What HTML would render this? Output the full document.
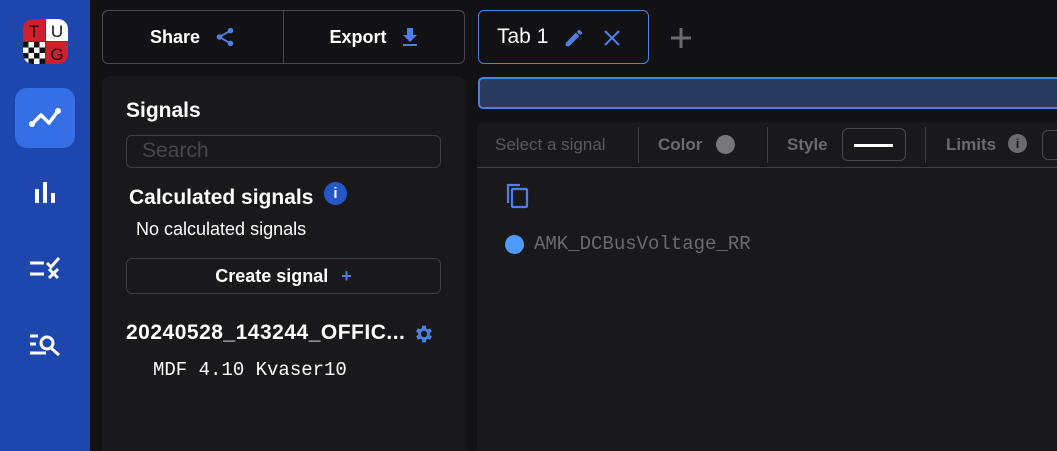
<!DOCTYPE html>
<html style="width:1057px;height:451px;overflow:hidden"><head><style>
*{box-sizing:border-box;margin:0;padding:0}
body{width:1057px;height:451px;overflow:hidden;background:#121214;font-family:"Liberation Sans",sans-serif;color:#fff;position:relative}
.abs{position:absolute}
.side{left:0;top:0;width:90px;height:451px;background:#1d47ad}
.btnbar{left:102px;top:10px;width:363px;height:54px;border:1px solid #4a4a4e;border-radius:6px;display:flex}
.btnbar div{flex:1;display:flex;align-items:center;justify-content:center;font-weight:bold;font-size:18px;gap:14px}
.panel{left:102px;top:76px;width:363px;height:375px;background:#19191b;border-radius:8px 8px 0 0}
.mono{font-family:"Liberation Mono",monospace}
</style></head><body>
<div class="abs side">
  <svg class="abs" style="left:23px;top:19px" width="46" height="46" viewBox="0 0 46 46">
    <clipPath id="c"><rect x="0" y="0" width="45" height="45" rx="10"/></clipPath>
    <g clip-path="url(#c)">
    <rect x="0" y="0" width="22" height="22" fill="#d0202e"/>
    <rect x="23" y="0" width="22" height="22" fill="#fff"/>
    <rect x="23" y="23" width="22" height="22" fill="#d0202e"/>
    <rect x="0" y="23" width="22" height="22" fill="#fff"/>
    <g fill="#111"><rect x="0" y="23" width="5.5" height="5.5"/><rect x="11" y="23" width="5.5" height="5.5"/><rect x="5.5" y="28.5" width="5.5" height="5.5"/><rect x="16.5" y="28.5" width="5.5" height="5.5"/><rect x="0" y="34" width="5.5" height="5.5"/><rect x="11" y="34" width="5.5" height="5.5"/><rect x="5.5" y="39.5" width="5.5" height="5.5"/><rect x="16.5" y="39.5" width="5.5" height="5.5"/></g>
    </g>
    <text x="11" y="18" font-size="17" text-anchor="middle" fill="#111" font-family="Liberation Sans">T</text>
    <text x="34" y="18" font-size="17" text-anchor="middle" fill="#111" font-family="Liberation Sans">U</text>
    <text x="34" y="41" font-size="17" text-anchor="middle" fill="#111" font-family="Liberation Sans">G</text>
  </svg>
  <div class="abs" style="left:15px;top:88px;width:60px;height:60px;background:#356fe6;border-radius:12px"></div>
  <svg class="abs" style="left:28px;top:106px" width="34" height="22" viewBox="0 0 34 22"><polyline points="4,18 13,9 21,17 30,5" fill="none" stroke="#fff" stroke-width="3.5" stroke-linecap="round" stroke-linejoin="round"/><circle cx="4" cy="18" r="3" fill="#fff"/><circle cx="30" cy="5" r="3" fill="#fff"/></svg>
  <svg class="abs" style="left:34px;top:182px" width="24" height="22"><rect x="1" y="7" width="4" height="14" fill="#fff"/><rect x="9" y="0" width="4" height="21" fill="#fff"/><rect x="17" y="11" width="4" height="10" fill="#fff"/></svg>
  <svg class="abs" style="left:29px;top:255px" width="34" height="26"><g stroke="#fff" stroke-width="3"><line x1="1" y1="8" x2="15" y2="8"/><line x1="1" y1="19" x2="15" y2="19"/><polyline points="18,8 22,12 30,3" fill="none"/><line x1="20" y1="14" x2="29" y2="23"/><line x1="29" y1="14" x2="20" y2="23"/></g></svg>
  <svg class="abs" style="left:29px;top:333px" width="34" height="24"><g stroke="#fff" stroke-width="3" fill="none"><line x1="1" y1="3" x2="9" y2="3"/><line x1="1" y1="11" x2="7" y2="11"/><line x1="1" y1="20" x2="17" y2="20"/><circle cx="18" cy="10" r="6"/><line x1="22" y1="15" x2="30" y2="22"/></g></svg>
</div>
<div class="abs btnbar">
  <div style="border-right:1px solid #4a4a4e">Share <svg width="22" height="22" viewBox="0 0 24 24"><g fill="#4d7fe6"><circle cx="18" cy="5" r="3"/><circle cx="6" cy="12" r="3"/><circle cx="18" cy="19" r="3"/></g><g stroke="#4d7fe6" stroke-width="2"><line x1="6" y1="12" x2="18" y2="5"/><line x1="6" y1="12" x2="18" y2="19"/></g></svg></div>
  <div>Export <svg width="18" height="20" viewBox="0 0 18 20"><path d="M6 1h6v7h4l-7 7-7-7h4z" fill="#4d7fe6"/><rect x="2" y="17" width="14" height="2" fill="#4d7fe6"/></svg></div>
</div>
<div class="abs panel">
  <div class="abs" style="left:24px;top:23px;font-size:21px;font-weight:bold">Signals</div>
  <div class="abs" style="left:24px;top:59px;width:315px;height:33px;border:1px solid #3e3e42;border-radius:6px;padding:3px 15px;font-size:21px;color:#48484c">Search</div>
  <div class="abs" style="left:27px;top:110px;font-size:21px;font-weight:bold">Calculated signals</div>
  <div class="abs" style="left:222px;top:106px;width:23px;height:23px;border-radius:50%;background:#2457c8;color:#fff;font-weight:bold;font-size:15px;text-align:center;line-height:23px">i</div>
  <div class="abs" style="left:34px;top:143px;font-size:18px">No calculated signals</div>
  <div class="abs" style="left:24px;top:182px;width:315px;height:36px;border:1px solid #3e3e42;border-radius:6px;text-align:center;line-height:34px;font-size:18px;font-weight:bold">Create signal <span style="color:#4d7fe6;margin-left:8px">+</span></div>
  <div class="abs" style="left:24px;top:245px;font-size:21px;font-weight:bold;letter-spacing:0.5px">20240528_143244_OFFIC...</div>
  <svg class="abs" style="left:311px;top:247px" width="22" height="22" viewBox="0 0 24 24"><path fill="#4d7fe6" d="M19.4 13a7.8 7.8 0 000-2l2.1-1.6-2-3.5-2.5 1a7.6 7.6 0 00-1.7-1L15 3h-4l-.4 2.7a7.6 7.6 0 00-1.7 1l-2.5-1-2 3.5L6.6 11a7.8 7.8 0 000 2l-2.1 1.6 2 3.5 2.5-1a7.6 7.6 0 001.7 1L11 21h4l.4-2.7a7.6 7.6 0 001.7-1l2.5 1 2-3.5zM13 15.5a3.5 3.5 0 110-7 3.5 3.5 0 010 7z" transform="translate(-1 0)"/></svg>
  <div class="abs mono" style="left:51px;top:283px;font-size:19px">MDF 4.10 Kvaser10</div>
</div>
<div class="abs" style="left:478px;top:10px;width:171px;height:54px;border:1px solid #4d7fe6;border-radius:6px"></div>
<div class="abs" style="left:497px;top:25px;font-size:21px">Tab 1</div>
<svg class="abs" style="left:563px;top:27px" width="22" height="22" viewBox="0 0 24 24"><path fill="#4d7fe6" d="M3 17.25V21h3.75L17.8 9.94l-3.75-3.75zM20.7 7.04a1 1 0 000-1.41l-2.34-2.34a1 1 0 00-1.41 0l-1.83 1.83 3.75 3.75z"/></svg>
<svg class="abs" style="left:603px;top:29px" width="18" height="18"><g stroke="#4d7fe6" stroke-width="2"><line x1="2" y1="2" x2="16" y2="16"/><line x1="16" y1="2" x2="2" y2="16"/></g></svg>
<svg class="abs" style="left:670px;top:27px" width="22" height="22"><g stroke="#6a6a70" stroke-width="3"><line x1="11" y1="1" x2="11" y2="21"/><line x1="1" y1="11" x2="21" y2="11"/></g></svg>
<div class="abs" style="left:478px;top:77px;width:600px;height:32px;background:#2a3a5e;border:2px solid #4d7fe6;border-radius:5px"></div>
<div class="abs" style="left:477px;top:122px;width:600px;height:329px;background:#19191b;border-radius:6px 6px 0 0"></div>
<div class="abs" style="left:477px;top:167px;width:600px;height:1px;background:#3e3e42"></div>
<div class="abs" style="left:495px;top:135px;font-size:17px;color:#5a5a5e">Select a signal</div>
<div class="abs" style="left:638px;top:127px;width:1px;height:36px;background:#3e3e42"></div>
<div class="abs" style="left:658px;top:135px;font-size:17px;font-weight:bold;color:#6a6a70">Color</div>
<div class="abs" style="left:716px;top:135px;width:19px;height:19px;border-radius:50%;background:#77777c"></div>
<div class="abs" style="left:767px;top:127px;width:1px;height:36px;background:#3e3e42"></div>
<div class="abs" style="left:787px;top:135px;font-size:17px;font-weight:bold;color:#6a6a70">Style</div>
<div class="abs" style="left:842px;top:128px;width:64px;height:33px;border:1px solid #4a4a4e;border-radius:6px"></div>
<div class="abs" style="left:854px;top:144px;width:39px;height:3px;background:#fff"></div>
<div class="abs" style="left:925px;top:127px;width:1px;height:36px;background:#3e3e42"></div>
<div class="abs" style="left:946px;top:135px;font-size:17px;font-weight:bold;color:#6a6a70">Limits</div>
<div class="abs" style="left:1008px;top:134px;width:19px;height:19px;border-radius:50%;background:#6a6a70;color:#19191b;font-weight:bold;font-size:13px;text-align:center;line-height:19px">i</div>
<div class="abs" style="left:1042px;top:130px;width:30px;height:30px;border:1px solid #4a4a4e;border-radius:6px"></div>
<svg class="abs" style="left:505px;top:183px" width="24" height="26"><g stroke="#4d7fe6" stroke-width="2.2" fill="none"><path d="M3 20V2h12"/><rect x="7" y="6" width="15" height="18" rx="1"/></g></svg>
<div class="abs" style="left:505px;top:235px;width:19px;height:19px;border-radius:50%;background:#4d9bff"></div>
<div class="abs mono" style="left:534px;top:233px;font-size:19px;color:#6a6a70">AMK_DCBusVoltage_RR</div>
</body></html>
